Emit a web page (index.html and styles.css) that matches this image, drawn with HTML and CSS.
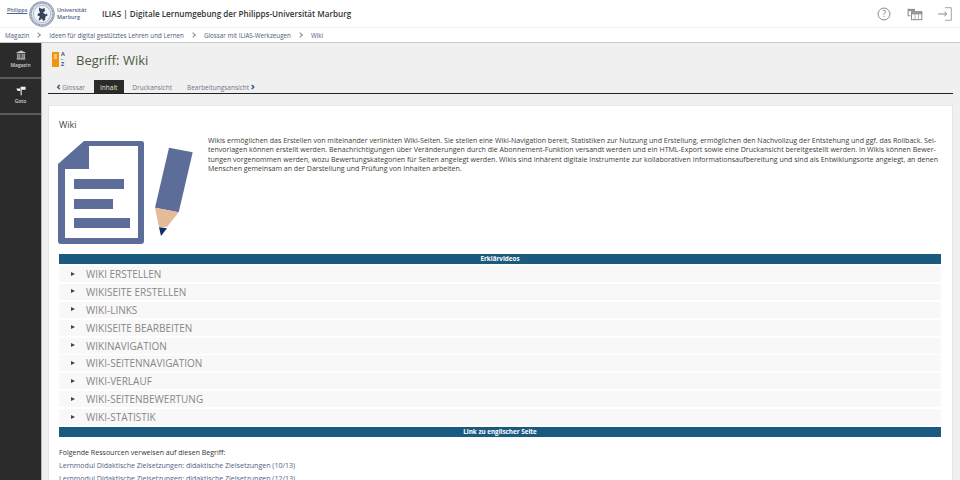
FILE: index.html
```html
<!DOCTYPE html>
<html lang="de">
<head>
<meta charset="utf-8">
<title>Begriff: Wiki</title>
<link rel="stylesheet" href="styles.css">
</head>
<body>
<header class="topbar">
  <div class="logo">
    <span class="logo-left">Philipps</span>
    <svg class="seal" viewBox="0 0 26 26" aria-hidden="true">
      <circle cx="13" cy="13" r="12.4" fill="#dfe4ec" stroke="#6f7f9c" stroke-width=".7"/>
      <circle cx="13" cy="13" r="11" fill="none" stroke="#7b8aa6" stroke-width="1.5" stroke-dasharray="1 .6"/>
      <circle cx="13" cy="13" r="8.6" fill="#f2f4f7" stroke="#7d8ba6" stroke-width=".5"/>
      <path d="M10 6.500l3 1.500 2.500-1 .5 3-2 1.500 2.500 2 1.500-1 .5 2-2 1-.5 3.500-2 1-1-2.500-2.500 2-1-1 1.500-3-2.500-1 .5-2 2-.5-1-3z" fill="#34435f"/>
    </svg>
    <span class="logo-right">Universität<br>Marburg</span>
  </div>
  <h1 class="site-title">ILIAS | Digitale Lernumgebung der Philipps-Universität Marburg</h1>
  <nav class="tools">
    <svg class="tool" viewBox="0 0 14 14" aria-hidden="true"><circle cx="7" cy="7" r="5.200" fill="none" stroke="#808080" stroke-width=".8"/><text x="7" y="9.500" text-anchor="middle" class="qmark">?</text></svg>
    <svg class="tool" viewBox="0 0 14 14" aria-hidden="true"><path d="M1 2.500h6v2H1z" fill="#909090"/><path d="M1 2.500v6h2" fill="none" stroke="#909090"/><rect x="4" y="5" width="9" height="7" fill="#fff" stroke="#808080" stroke-width=".8"/><path d="M4 5.500h9v1.500H4zM7 7v5M10 7v5" fill="#a0a0a0" stroke="#808080" stroke-width=".5"/></svg>
    <svg class="tool" viewBox="0 0 14 14" aria-hidden="true"><path d="M7 1.500h5.500v11H7" fill="none" stroke="#9a9a9a" stroke-width=".8"/><path d="M1 7h7.500M6.500 5l2 2-2 2" fill="none" stroke="#808080" stroke-width=".8"/></svg>
  </nav>
</header>
<nav class="crumbs">
  <a>Magazin</a><i class="sep"></i><a>Ideen für digital gestütztes Lehren und Lernen</a><i class="sep"></i><a>Glossar mit ILIAS-Werkzeugen</a><i class="sep"></i><a>Wiki</a>
</nav>
<div class="shell">
  <aside class="side">
    <div class="side-item">
      <svg class="side-icon" viewBox="0 0 12 12" aria-hidden="true"><path d="M6 .5L11.500 3v1H.5V3zM1.500 4.800h1.500v4.700H1.500zM4 4.800h1.200v4.700H4zM6.800 4.800H8v4.700H6.800zM9 4.800h1.500v4.700H9zM.8 10h10.400v1.300H.8z" fill="#c8c8c8"/></svg>
      <span>Magazin</span>
    </div>
    <div class="side-item">
      <svg class="side-icon" viewBox="0 0 12 12" aria-hidden="true"><path d="M5.500 1h6v3.500h-6zM.3 3h4.700v3H2zM5.500 4.500h1.300V11H5.500z" fill="#f2f2f2"/></svg>
      <span>Goto</span>
    </div>
  </aside>
  <main class="main">
    <div class="page-head">
      <div class="gloss-icon"><span class="gloss-bar"></span><span class="gloss-az">A<br>-<br>Z</span></div>
      <h2 class="page-title">Begriff: Wiki</h2>
    </div>
    <div class="tabs">
      <a class="tab"><b class="arrow">‹</b> Glossar</a>
      <a class="tab active">Inhalt</a>
      <a class="tab">Druckansicht</a>
      <a class="tab">Bearbeitungsansicht <b class="arrow">›</b></a>
    </div>
    <section class="card">
      <h3 class="card-title">Wiki</h3>
      <div class="intro">
        <svg class="wiki-art" viewBox="0 0 135 105" aria-hidden="true">
          <path fill-rule="evenodd" d="M26 1h57.500a2.500 2.500 0 0 1 2.500 2.500V101a3 3 0 0 1-3 3H3a3 3 0 0 1-3-3V24zM31 6v23H7v69h73V6z" fill="#5d6d99"/>
          <path d="M16 39h50v10H16zM16 59h39v10H16zM16 78h56v10H16z" fill="#5d6d99"/>
          <path d="M111 7.700L134.700 12.300 120.700 72.300 97 67.700z" fill="#5d6d99"/>
          <path d="M97 67.700L120.700 72.300 109 87 101 87.500z" fill="#e5bb98"/>
          <path d="M101 87.300L109 88.300 103 96z" fill="#0f2f66"/>
        </svg>
        <p class="intro-text">Wikis ermöglichen das Erstellen von miteinander verlinkten Wiki-Seiten. Sie stellen eine Wiki-Navigation bereit, Statistiken zur Nutzung und Erstellung, ermöglichen den Nachvollzug der Entstehung und ggf. das Rollback. Sei-<br>tenvorlagen können erstellt werden. Benachrichtigungen über Veränderungen durch die Abonnement-Funktion versandt werden und ein HTML-Export sowie eine Druckansicht bereitgestellt werden. In Wikis können Bewer-<br>tungen vorgenommen werden, wozu Bewertungskategorien für Seiten angelegt werden. Wikis sind inhärent digitale Instrumente zur kollaborativen Informationsaufbereitung und sind als Entwiklungsorte angelegt, an denen<br>Menschen gemeinsam an der Darstellung und Prüfung von Inhalten arbeiten.</p>
      </div>
      <div class="band">Erklärvideos</div>
      <ul class="acc">
        <li>WIKI ERSTELLEN</li>
        <li>WIKISEITE ERSTELLEN</li>
        <li>WIKI-LINKS</li>
        <li>WIKISEITE BEARBEITEN</li>
        <li>WIKINAVIGATION</li>
        <li>WIKI-SEITENNAVIGATION</li>
        <li>WIKI-VERLAUF</li>
        <li>WIKI-SEITENBEWERTUNG</li>
        <li>WIKI-STATISTIK</li>
      </ul>
      <div class="band">Link zu englischer Seite</div>
      <p class="refs-title">Folgende Ressourcen verweisen auf diesen Begriff:</p>
      <a class="ref">Lernmodul Didaktische Zielsetzungen: didaktische Zielsetzungen (10/13)</a>
      <a class="ref">Lernmodul Didaktische Zielsetzungen: didaktische Zielsetzungen (12/13)</a>
    </section>
  </main>
</div>
</body>
</html>
```
FILE: styles.css
```css
* { box-sizing: border-box; }
html, body { margin: 0; height: 100%; overflow: hidden; }
body { font-family: "Open Sans", sans-serif; color: #333; background: #f0f0f0; }

.topbar { height: 27px; background: #fff; display: flex; align-items: center; padding-left: 7px; }
.logo { display: flex; align-items: center; width: 95px; height: 27px; color: #4f6288; font-size: 5.500px; line-height: 7px; font-weight: 600; }
.logo-left { width: 21px; font-size: 5.300px; text-decoration: underline; margin-top: -6px; white-space: nowrap; }
.seal { width: 26px; height: 26px; margin-left: 1px; flex: none; }
.logo-right { margin-left: 2px; white-space: nowrap; }
.site-title { margin: 0; font-size: 8.100px; font-weight: 600; color: #333; white-space: nowrap; }
.tools { margin-left: auto; display: flex; gap: 14.500px; padding-right: 7px; }
.tool { width: 16px; height: 16px; }
.qmark { font-size: 7.500px; fill: #808080; font-family: "Open Sans", sans-serif; }

.crumbs { height: 15px; background: #fff; border-top: 1px solid #f2f2f2; display: flex; align-items: center; padding-left: 5px; font-size: 6.250px; color: #4c5a78; }
.sep { width: 4px; height: 4px; border-top: 1px solid #8a8a8a; border-right: 1px solid #8a8a8a; transform: rotate(45deg); margin: 0 9px 0 7px; }

.shell { display: flex; height: 438px; border-top: 1px solid #c9c9c9; }
.side { width: 41px; flex: none; background: #2b2b2b; }
.side-item { height: 36px; border-bottom: 2px solid #5a5a5a; display: flex; flex-direction: column; align-items: center; padding-top: 7px; color: #d4d4d4; font-size: 5px; line-height: 6px; font-weight: 600; gap: 2px; }
.side-icon { width: 10px; height: 10px; }

.main { flex: 1; min-width: 0; border-left: 1px solid #b5b5b5; padding: 0 7px 0 6px; }
.page-head { height: 37px; display: flex; align-items: center; padding: 0 0 3px 4px; }
.gloss-icon { display: flex; width: 19px; height: 16px; gap: 2px; }
.gloss-bar { width: 7px; height: 15px; background: #f0960e; position: relative; }
.gloss-bar::after { content: ""; position: absolute; left: 2px; top: 2px; width: 3px; height: 5px; background: #f6c37a; }
.gloss-az { font-size: 5.500px; line-height: 5px; font-weight: 700; color: #3f5a80; }
.page-title { margin: 0 0 0 5px; font-size: 13px; font-weight: 400; color: #4c5a3c; }

.tabs { height: 14px; border-bottom: 1px solid #222; display: flex; align-items: flex-end; gap: 2px; padding-left: 2px; font-size: 6.500px; color: #6f7787; }
.tab { height: 13px; line-height: 15px; padding: 0 6.500px; white-space: nowrap; }
.tab.active { background: #2b2b2b; color: #e8e2cf; }
.arrow { color: #35507a; font-size: 11px; line-height: 9px; font-weight: 700; }

.card { margin-top: 11px; height: 400px; background: #fff; border: 1px solid #e6e6e6; padding: 12px 10px 0; }
.card-title { margin: 0; font-size: 9px; line-height: 13px; font-weight: 400; color: #444; }
.intro { display: flex; align-items: flex-start; height: 123px; padding-top: 9px; margin-right: 1px; }
.wiki-art { width: 135px; height: 105px; flex: none; margin-left: -1px; }
.intro-text { margin: -4px 0 0 15px; font-size: 7.060px; line-height: 9.300px; color: #403a36; white-space: nowrap; }

.band { height: 10px; margin-right: 1px; background: #1a5a80; color: #fff; text-align: center; font-size: 6.300px; line-height: 10px; font-weight: 700; }
.acc { list-style: none; margin: 0 1px 0 0; padding: 2px 0 0; }
.acc li { height: 16px; margin-bottom: 1.900px; background: #f8f8f8; color: #878787; font-size: 10px; line-height: 16px; padding-left: 27px; display: flex; align-items: center; position: relative; }
.acc li::before { content: ""; position: absolute; left: 12px; top: 5.500px; border-left: 4.500px solid #444; border-top: 2.800px solid transparent; border-bottom: 2.800px solid transparent; }

.refs-title { margin: 9px 0 0; font-size: 7.050px; line-height: 13px; color: #333; }
.ref { display: block; font-size: 7.060px; line-height: 12.700px; color: #4f6288; }
```
